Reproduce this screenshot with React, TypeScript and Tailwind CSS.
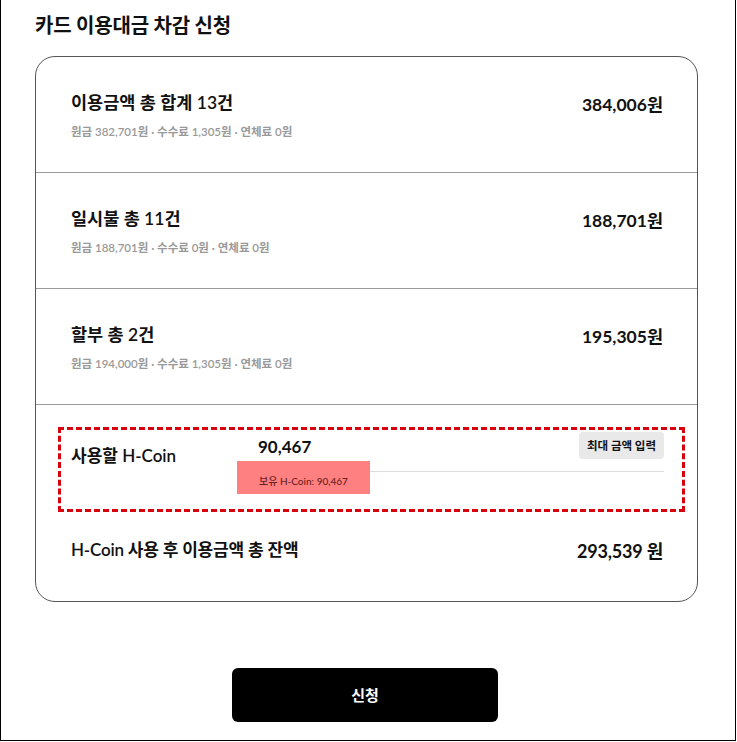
const rows = [
  { title: '이용금액 총 합계 13건', detail: ['원금 382,701원', '수수료 1,305원', '연체료 0원'], amount: '384,006원' },
  { title: '일시불 총 11건', detail: ['원금 188,701원', '수수료 0원', '연체료 0원'], amount: '188,701원' },
  { title: '할부 총 2건', detail: ['원금 194,000원', '수수료 1,305원', '연체료 0원'], amount: '195,305원' },
]

export default function App() {
  return (
    <div
      className="w-[736px] h-[741px] border-l border-r border-b border-black bg-white text-[#111]"
      style={{ fontFamily: 'Lato, "Noto Sans CJK KR", sans-serif' }}
    >
      <h1 className="pl-[34px] pt-[10px] text-[20px] font-bold leading-[30px] tracking-[-0.2px]">카드 이용대금 차감 신청</h1>

      <div className="mt-[16px] ml-[34px] w-[663px] rounded-[20px] border border-[#555]">
        {rows.map((row) => (
          <div key={row.title} className="flex h-[116px] items-start justify-between border-b border-[#999] pl-[35px] pr-[34px] pt-[32px]">
            <div>
              <div className="text-[17.5px] font-semibold leading-[28px]">{row.title}</div>
              <div className="mt-[6px] text-[11.5px] font-semibold leading-[18px] text-[#999]">
                {row.detail.join(' · ')}
              </div>
            </div>
            <div className="pt-[3px] text-[17.5px] font-bold leading-[26px]">{row.amount}</div>
          </div>
        ))}

        <div className="pl-[22px] pr-[12px] pt-[22px]">
          <div className="flex h-[85px] border-[3px] border-dashed border-[#d8000c] pl-[10px] pr-[18px] pt-[2px]">
            <div className="w-[187px] pt-[11px] text-[17px] font-semibold leading-[26px]">사용할 H-Coin</div>
            <div className="flex-1">
              <div className="flex items-start justify-between">
                <div className="pt-[2px] text-[17px] font-bold leading-[26px]">90,467</div>
                <button className="rounded-[4px] bg-[#e9e9e9] px-[8px] text-[11.5px] font-bold leading-[27px]">최대 금액 입력</button>
              </div>
              <div className="mt-[11px] h-px bg-[#ddd]" />
              <div className="relative">
                <div className="absolute -left-[21px] -top-[11px] h-[33px] w-[133px] bg-[#ff8080]" />
                <div className="relative pl-[1px] pt-[1px] text-[10px] font-medium leading-[16px] text-[#6b2323]">보유 H-Coin: 90,467</div>
              </div>
            </div>
          </div>
        </div>

        <div className="flex items-start justify-between pl-[35px] pr-[34px] pt-[25px] pb-[37px]">
          <div className="text-[17px] font-semibold leading-[26px] tracking-[-0.2px]">H-Coin 사용 후 이용금액 총 잔액</div>
          <div className="pt-[1px] text-[18px] font-bold leading-[26px] tracking-[-0.2px]">293,539 원</div>
        </div>
      </div>

      <div className="mt-[66px] flex pl-[231px]">
        <button className="h-[54px] w-[266px] rounded-[6px] bg-black text-[15px] font-bold text-white">신청</button>
      </div>
    </div>
  )
}
